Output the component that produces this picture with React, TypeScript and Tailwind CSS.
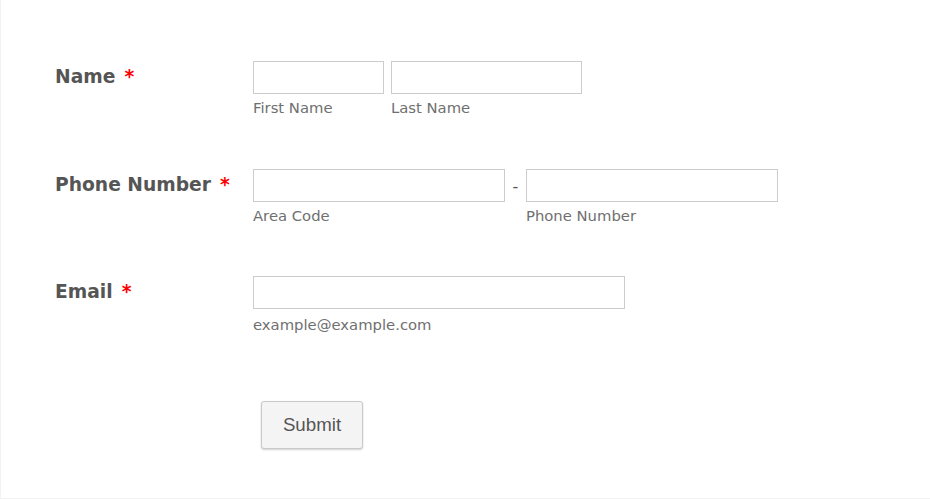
import React from 'react';

const labelFont = { fontFamily: '"DejaVu Sans", Verdana, sans-serif' };

function FieldLabel({ text }: { text: string }) {
  return (
    <div className="w-[252px] shrink-0 pl-[54px] pt-[5px] whitespace-nowrap">
      <span className="text-[18.7px] leading-[22px] font-bold text-[#555555]">
        {text}
        <span className="ml-[9px] text-[#f00]">*</span>
      </span>
    </div>
  );
}

function Box({ width }: { width: string }) {
  return <input type="text" className={`${width} h-[33px] border border-[#cccccc] bg-white outline-none`} />;
}

function Sub({ text }: { text: string }) {
  return <div className="mt-[5px] text-[14.8px] leading-[18px] text-[#6f6f6f] whitespace-nowrap">{text}</div>;
}

export default function App() {
  return (
    <div className="w-[930px] h-[499px] bg-white border-l border-b border-[#f2f2f2]" style={labelFont}>
      <div className="pt-[61px]">
        <div className="flex h-[108px]">
          <FieldLabel text="Name" />
          <div className="flex gap-[7px]">
            <div>
              <Box width="w-[131px]" />
              <Sub text="First Name" />
            </div>
            <div>
              <Box width="w-[191px]" />
              <Sub text="Last Name" />
            </div>
          </div>
        </div>

        <div className="flex h-[107px]">
          <FieldLabel text="Phone Number" />
          <div className="flex">
            <div>
              <Box width="w-[252px]" />
              <Sub text="Area Code" />
            </div>
            <div className="w-[21px] h-[33px] pt-[2px] flex items-center justify-center text-[16px] text-[#555555]">-</div>
            <div>
              <Box width="w-[252px]" />
              <Sub text="Phone Number" />
            </div>
          </div>
        </div>

        <div className="flex h-[107px]">
          <FieldLabel text="Email" />
          <div>
            <Box width="w-[372px]" />
            <div className="mt-[7px] text-[14.8px] leading-[18px] text-[#6f6f6f] whitespace-nowrap">example@example.com</div>
          </div>
        </div>

        <div className="pl-[260px] pt-[18px]">
          <button
            type="submit"
            className="w-[102px] h-[48px] rounded-[3px] border border-[#c9c9c9] bg-[#f4f4f4] text-[18.7px] text-[#555555] shadow-[0_1px_2px_rgba(0,0,0,0.18)]"
            style={{ fontFamily: '"Liberation Sans", Arial, sans-serif' }}
          >
            Submit
          </button>
        </div>
      </div>
    </div>
  );
}
